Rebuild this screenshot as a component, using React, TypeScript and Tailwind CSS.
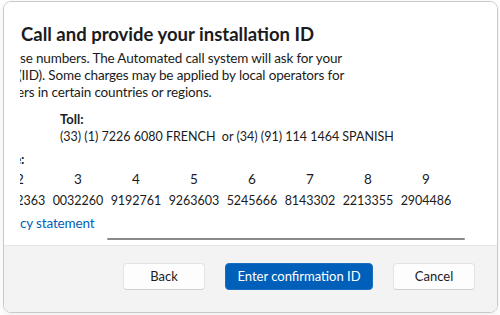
import React from "react";

const font = { fontFamily: 'Lato, "Open Sans", sans-serif' };

function Btn({ children, primary, w }: { children: React.ReactNode; primary?: boolean; w: string }) {
  return (
    <div
      className={
        primary
          ? `${w} h-[27px] rounded-[4px] bg-[#005fb8] border border-[#1a6ec0] text-white flex items-center justify-center text-[13px]`
          : `${w} h-[27px] rounded-[4px] bg-[#fdfdfd] border border-[#e3e3e3] border-b-[#cfcfcf] text-[#1b1b1b] flex items-center justify-center text-[13px]`
      }
    >
      {children}
    </div>
  );
}

export default function App() {
  const heads = ["2", "3", "4", "5", "6", "7", "8", "9"];
  const vals = ["0002363", "0032260", "9192761", "9263603", "5245666", "8143302", "2213355", "2904486"];
  return (
    <div className="w-[500px] h-[315px] bg-white overflow-hidden pt-[1px] pl-[3px]" style={font}>
      <div className="w-[495px] h-[312px] rounded-[8px] border border-[#c9c9c9] overflow-hidden flex flex-col shadow-[0_2px_6px_rgba(0,0,0,0.08)]">
        <div className="flex-1 bg-white flex flex-col">
          <div className="pl-[17px] pt-[18px] h-[48px] text-[18.5px] leading-[28px] font-bold text-[#1b1b1b] whitespace-nowrap">
            Call and provide your installation ID
          </div>
          <div className="ml-[16px] overflow-hidden text-[#1b1b1b] text-[13.5px] tracking-[-0.15px]">
            <div className="leading-[17px] whitespace-nowrap">se numbers. The Automated call system will ask for your</div>
            <div className="leading-[17px] whitespace-nowrap ml-[-2px]">(IID). Some charges may be applied by local operators for</div>
            <div className="leading-[17px] whitespace-nowrap ml-[-3px]">ers in certain countries or regions.</div>
            <div className="pl-[40px] mt-[9px] leading-[18px] font-bold tracking-normal text-[13px]">Toll:</div>
            <div className="pl-[40px] leading-[18px] whitespace-nowrap text-[12.5px] tracking-normal">
              (33) (1) 7226 6080 FRENCH&nbsp; or (34) (91) 114 1464 SPANISH
            </div>
            <div className="mt-[4px] leading-[18px] ml-[-6px] whitespace-nowrap font-bold">e:</div>
            <div className="mt-[1px] ml-[-29px] grid grid-cols-[repeat(8,58px)] gap-y-[2px] leading-[20px] text-[12.5px] tracking-normal">
              {heads.map((h) => (
                <div key={h} className="text-center text-[13.5px]">{h}</div>
              ))}
              {vals.map((v) => (
                <div key={v} className="text-center">{v}</div>
              ))}
            </div>
            <div className="mt-[2px] leading-[20px] text-[#005fb8] whitespace-nowrap">cy statement</div>
            <div className="ml-[87px] w-[358px] h-[2px] rounded-full bg-[#8a8a8a] mt-[5px]"></div>
          </div>
        </div>
        <div className="h-[67px] bg-[#f3f3f3] border-t border-[#e5e5e5] flex items-start justify-end gap-[20px] pt-[17px] pr-[22px]">
          <Btn w="w-[82px]">Back</Btn>
          <Btn w="w-[148px]" primary>Enter confirmation ID</Btn>
          <Btn w="w-[82px]">Cancel</Btn>
        </div>
      </div>
    </div>
  );
}
